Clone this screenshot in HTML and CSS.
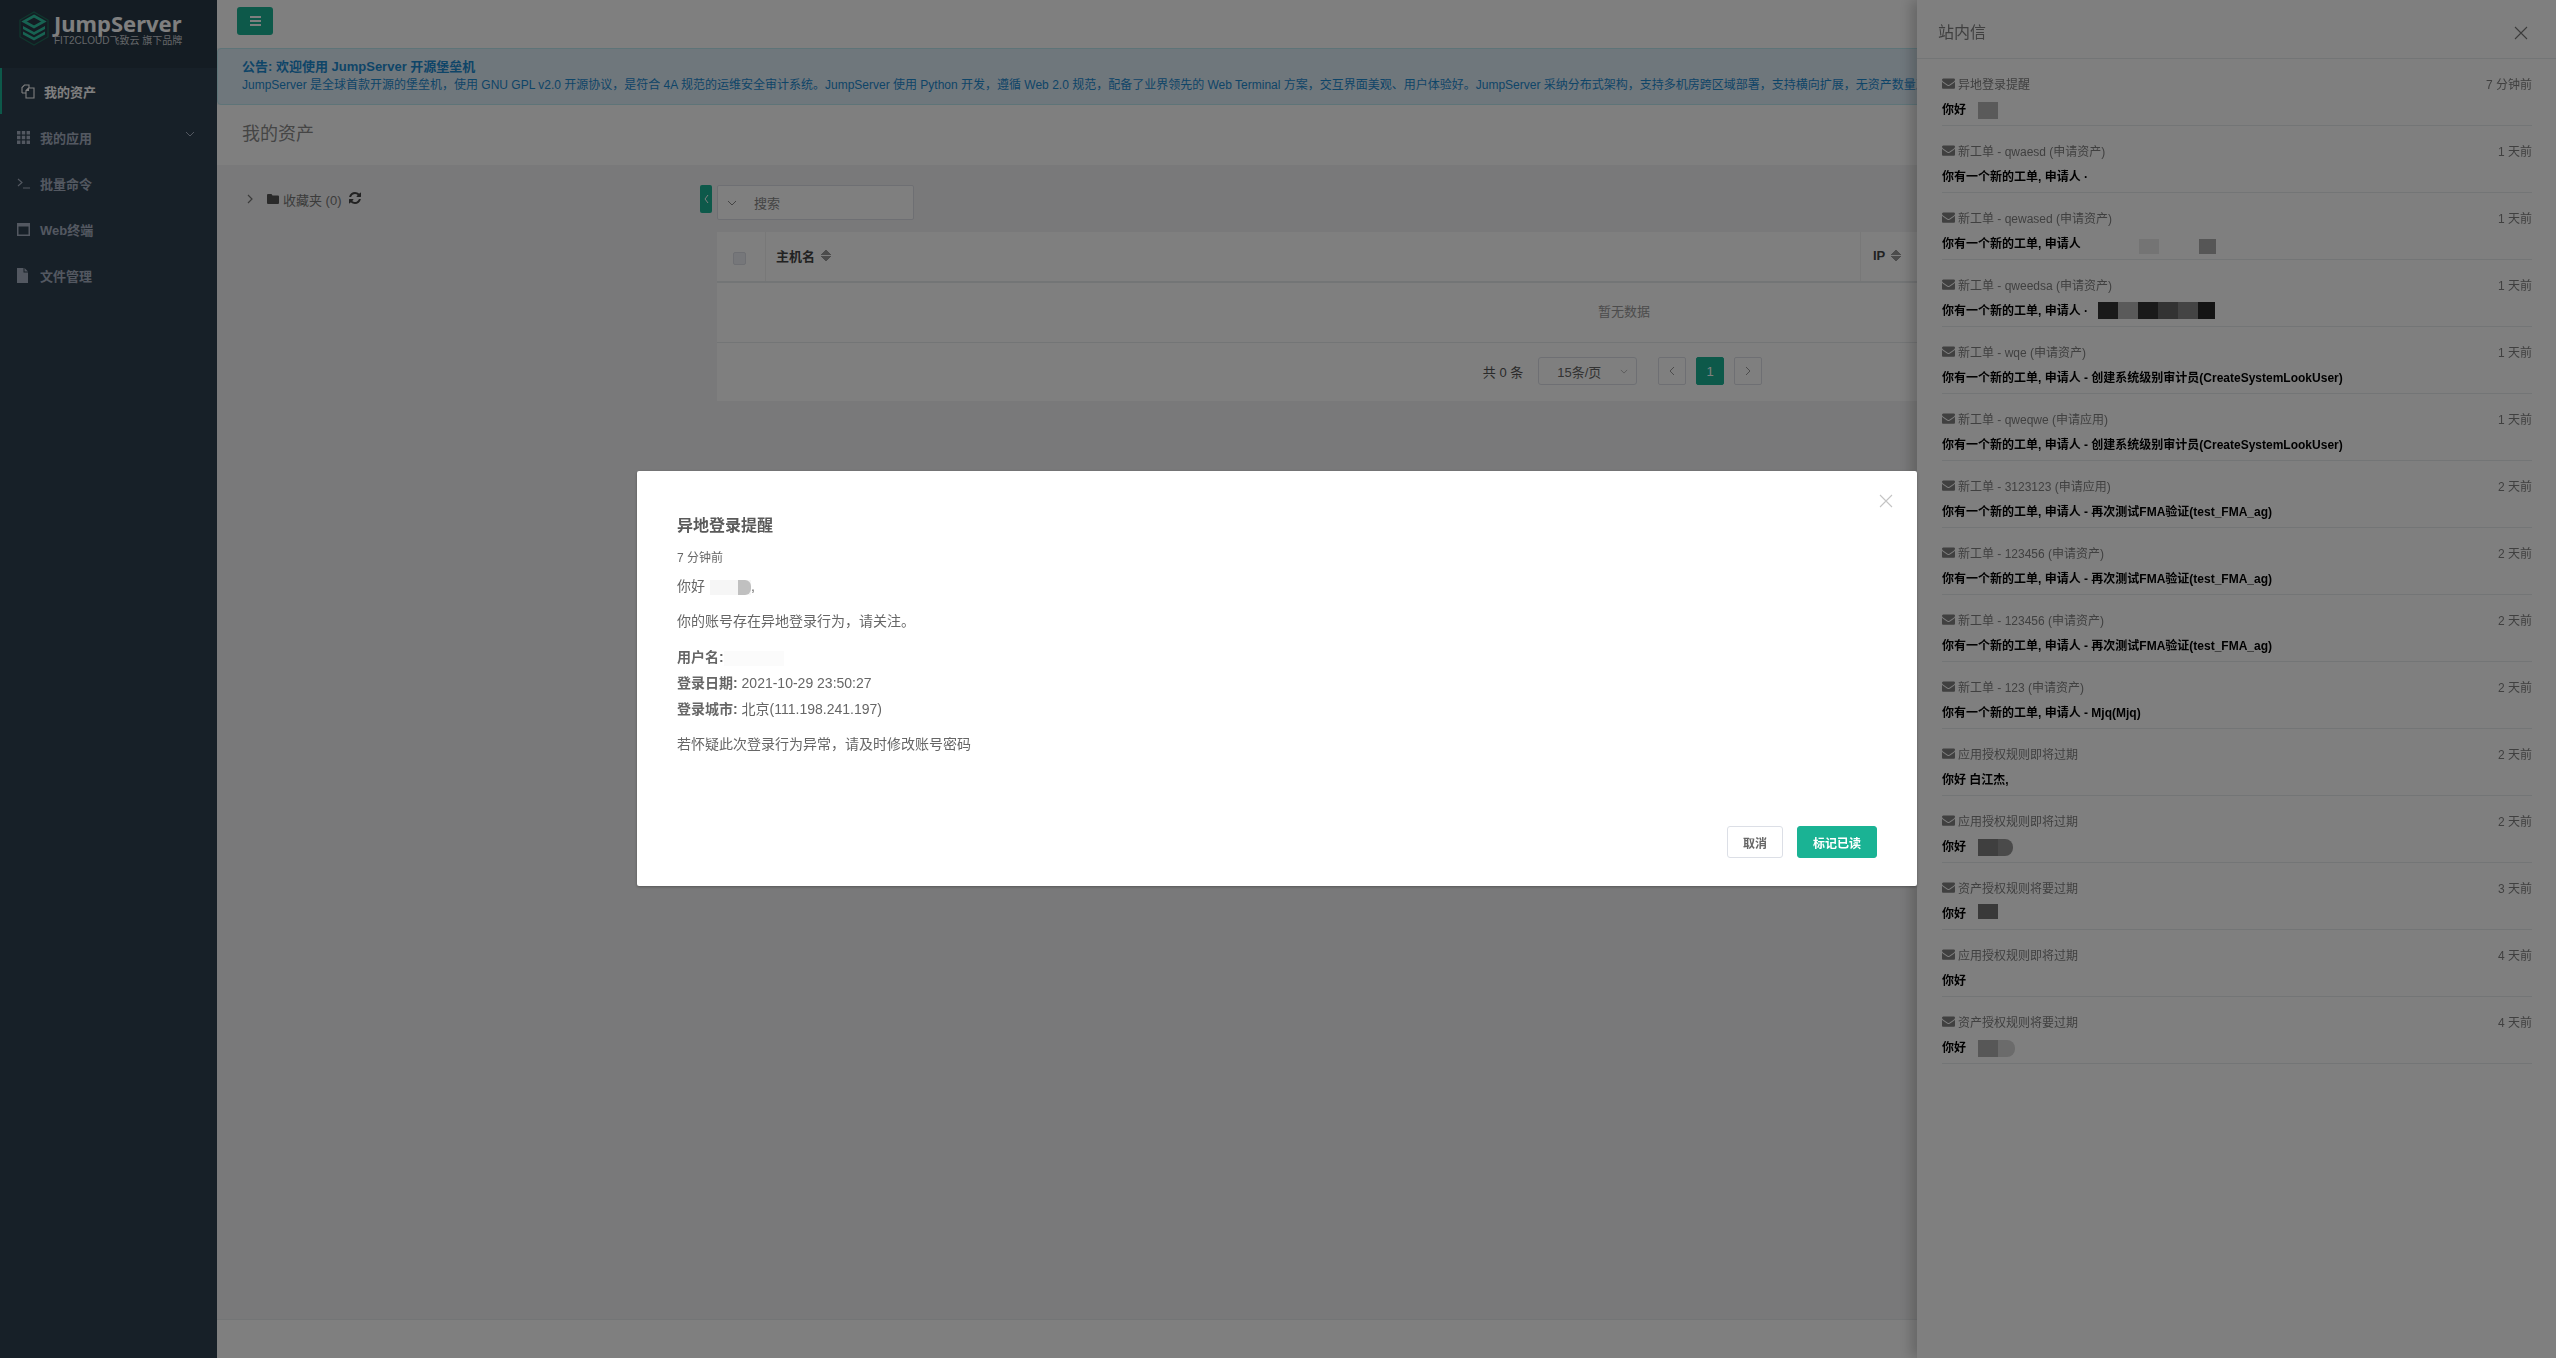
FILE: index.html
```html
<!DOCTYPE html>
<html lang="zh-CN">
<head>
    <meta charset="UTF-8">
    <title>我的资产 - JumpServer</title>
    <link rel="stylesheet" href="styles.css">
</head>
<body>
    <div class="app">
        <aside class="sidebar">
            <div class="logo">
                <svg class="logo-mark" viewBox="0 0 30 35" width="30" height="35">
                    <path d="M15 1 L29 9 V26 L15 34 L1 26 V9 Z" fill="none" stroke="#1f6f5c" stroke-width="1.2"/>
                    <path d="M15 5 L25 10.5 L15 16 L5 10.5 Z" fill="none" stroke="#2fc7a4" stroke-width="2.6"/>
                    <path d="M4 15 L15 21 L26 15 V18 L15 24 L4 18 Z" fill="#2fc7a4"/>
                    <path d="M4 20.5 L15 26.5 L26 20.5 V23.5 L15 29.5 L4 23.5 Z" fill="#2fc7a4"/>
                </svg>
                <div class="logo-text">
                    <div class="logo-name">JumpServer</div>
                    <div class="logo-sub">FIT2CLOUD飞致云 旗下品牌</div>
                </div>
            </div>
            <nav class="menu">
                <a class="menu-item active">
                    <svg class="menu-icon" viewBox="0 0 14 15" width="14" height="15"><path d="M1 9 V3.5 L3.5 1 H8 V4 M5 14 V6.5 L7.5 4 H13 V14 Z M1 9 H5 M7.5 4 V6.5 H5" fill="none" stroke="currentColor" stroke-width="1.1"/></svg>
                    <span>我的资产</span>
                </a>
                <a class="menu-item">
                    <svg class="menu-icon" viewBox="0 0 13 13" width="13" height="13"><path d="M0 0h3.4v3.4H0zM4.8 0h3.4v3.4H4.8zM9.6 0H13v3.4H9.6zM0 4.8h3.4v3.4H0zM4.8 4.8h3.4v3.4H4.8zM9.6 4.8H13v3.4H9.6zM0 9.6h3.4V13H0zM4.8 9.6h3.4V13H4.8zM9.6 9.6H13V13H9.6z" fill="currentColor"/></svg>
                    <span>我的应用</span>
                    <svg class="menu-arrow" viewBox="0 0 10 6" width="10" height="6"><path d="M1 1 L5 5 L9 1" fill="none" stroke="currentColor"/></svg>
                </a>
                <a class="menu-item">
                    <svg class="menu-icon" viewBox="0 0 13 11" width="13" height="11"><path d="M1 1 L5 4.5 L1 8 M6 10 H13" fill="none" stroke="currentColor" stroke-width="1.1"/></svg>
                    <span>批量命令</span>
                </a>
                <a class="menu-item">
                    <svg class="menu-icon" viewBox="0 0 13 13" width="13" height="13"><path d="M0 0H13V13H0ZM1.5 3.5V11.5H11.5V3.5Z" fill="currentColor" fill-rule="evenodd"/></svg>
                    <span>Web终端</span>
                </a>
                <a class="menu-item">
                    <svg class="menu-icon icon-file" viewBox="0 0 11 15" width="11" height="15"><path d="M0 0H6.5V4.5H11V15H0ZM7.5 0L11 3.5H7.5Z" fill="currentColor"/></svg>
                    <span>文件管理</span>
                </a>
            </nav>
        </aside>

        <main class="main">
            <header class="topbar">
                <button class="btn-menu"><svg viewBox="0 0 11 10" width="11" height="10"><path d="M0 0h11v2H0zM0 4h11v2H0zM0 8h11v2H0z" fill="currentColor"/></svg></button>
            </header>
            <div class="notice">
                <div class="notice-title">公告: 欢迎使用 JumpServer 开源堡垒机</div>
                <div class="notice-text">JumpServer 是全球首款开源的堡垒机，使用 GNU GPL v2.0 开源协议，是符合 4A 规范的运维安全审计系统。JumpServer 使用 Python 开发，遵循 Web 2.0 规范，配备了业界领先的 Web Terminal 方案，交互界面美观、用户体验好。JumpServer 采纳分布式架构，支持多机房跨区域部署，支持横向扩展，无资产数量及并发限制。</div>
            </div>
            <div class="page-title">我的资产</div>
            <section class="content">
                <div class="tree">
                    <svg class="tree-arrow" viewBox="0 0 6 10" width="6" height="10"><path d="M1 1 L5 5 L1 9" fill="none" stroke="currentColor" stroke-width="1.2"/></svg>
                    <svg class="tree-folder" viewBox="0 0 12 10" width="12" height="10"><path d="M0 1 Q0 0 1 0 H4.5 L5.5 1.5 H11 Q12 1.5 12 2.5 V9 Q12 10 11 10 H1 Q0 10 0 9 Z" fill="currentColor"/></svg>
                    <span>收藏夹 (0)</span>
                    <svg class="tree-refresh" viewBox="0 0 1792 1792" width="14" height="14"><path d="M1639 1056q0 5-1 7-64 268-268 434.5t-478 166.5q-146 0-282.5-55t-243.5-157l-129 129q-19 19-45 19t-45-19-19-45v-448q0-26 19-45t45-19h448q26 0 45 19t19 45-19 45l-137 137q71 66 161 102t187 36q134 0 250-65t186-179q11-17 53-117 8-23 30-23h192q13 0 22.5 9.5t9.5 22.5zm25-800v448q0 26-19 45t-45 19h-448q-26 0-45-19t-19-45 19-45l138-138q-148-137-349-137-134 0-250 65t-186 179q-11 17-53 117-8 23-30 23h-199q-13 0-22.5-9.5t-9.5-22.5v-7q65-268 270-434.5t480-166.5q146 0 284 55.5t245 156.5l130-129q19-19 45-19t45 19 19 45z" fill="currentColor"/></svg>
                </div>
                <div class="tree-toggle"><svg viewBox="0 0 5 10" width="5" height="10"><path d="M4 1 L1 5 L4 9" fill="none" stroke="currentColor"/></svg></div>
                <div class="panel">
                    <div class="search">
                        <svg viewBox="0 0 10 6" width="10" height="6"><path d="M1 1 L5 5 L9 1" fill="none" stroke="currentColor"/></svg>
                        <span>搜索</span>
                    </div>
                    <div class="table">
                        <div class="table-head">
                            <div class="col-check"><span class="checkbox"></span></div>
                            <div class="col-name">主机名 <span class="sort"></span></div>
                            <div class="col-ip">IP <span class="sort"></span></div>
                        </div>
                        <div class="table-empty">暂无数据</div>
                        <div class="pager">
                            <span class="pager-total">共 0 条</span>
                            <span class="pager-size">15条/页<svg viewBox="0 0 10 6" width="8" height="5"><path d="M1 1 L5 5 L9 1" fill="none" stroke="currentColor"/></svg></span>
                            <span class="pager-btn"><svg viewBox="0 0 6 10" width="6" height="10"><path d="M5 1 L1 5 L5 9" fill="none" stroke="currentColor"/></svg></span>
                            <span class="pager-btn current">1</span>
                            <span class="pager-btn"><svg viewBox="0 0 6 10" width="6" height="10"><path d="M1 1 L5 5 L1 9" fill="none" stroke="currentColor"/></svg></span>
                        </div>
                    </div>
                </div>
            </section>
            <footer class="footer"></footer>
        </main>
    </div>

    <svg class="sprite">
        <symbol id="mail" viewBox="0 0 1792 1500">
            <path transform="translate(0 -192)" d="M1792 710v794q0 66-47 113t-113 47h-1472q-66 0-113-47t-47-113v-794q44 49 101 87 362 246 497 345 57 42 92.5 65.5t94.5 48 110 24.5h2q51 0 110-24.5t94.5-48 92.5-65.5q170-123 498-345 57-39 100-87zm0-294q0 79-49 151t-122 123q-376 261-468 325-10 7-42.5 30.5t-54 38-52 32.5-57.5 27-50 9h-2q-23 0-50-9t-57.5-27-52-32.5-54-38-42.5-30.5q-91-64-262-182.5t-205-142.5q-62-42-117-115.5t-55-136.5q0-78 41.5-130t118.5-52h1472q65 0 112.5 47t47.5 113z" fill="currentColor"/>
        </symbol>
    </svg>

    <aside class="drawer">
        <div class="drawer-head">
            <span>站内信</span>
            <svg viewBox="0 0 14 14" width="14" height="14"><path d="M1 1 L13 13 M13 1 L1 13" fill="none" stroke="currentColor" stroke-width="1.1"/></svg>
        </div>
        <ul class="msg-list">
            <li class="msg">
                <div class="msg-head"><svg class="mail"><use href="#mail"/></svg><span class="msg-title">异地登录提醒</span><span class="msg-time">7 分钟前</span></div>
                <div class="msg-body">你好<span class="mosaic m-name"><i class="px tall c-5a"></i></span></div>
            </li>
            <li class="msg">
                <div class="msg-head"><svg class="mail"><use href="#mail"/></svg><span class="msg-title">新工单 - qwaesd (申请资产)</span><span class="msg-time">1 天前</span></div>
                <div class="msg-body">你有一个新的工单, 申请人 ·<span class="mosaic m-user"><i class="px low c-fa"></i><i class="px low c-fa"></i><i class="px low c-fa"></i></span></div>
            </li>
            <li class="msg">
                <div class="msg-head"><svg class="mail"><use href="#mail"/></svg><span class="msg-title">新工单 - qewased (申请资产)</span><span class="msg-time">1 天前</span></div>
                <div class="msg-body">你有一个新的工单, 申请人<span class="mosaic m-user2"><i class="px mid c-fa"></i><i class="px mid c-fa"></i><i class="px mid c-74"></i><i class="px mid c-fa"></i><i class="px mid c-fa"></i><i class="px mid end c-56"></i></span></div>
            </li>
            <li class="msg">
                <div class="msg-head"><svg class="mail"><use href="#mail"/></svg><span class="msg-title">新工单 - qweedsa (申请资产)</span><span class="msg-time">1 天前</span></div>
                <div class="msg-body">你有一个新的工单, 申请人 ·<span class="mosaic m-user"><i class="px tall c-1a"></i><i class="px tall c-5a"></i><i class="px tall c-1a"></i><i class="px tall c-33"></i><i class="px tall c-44"></i><i class="px tall end c-14"></i></span></div>
            </li>
            <li class="msg">
                <div class="msg-head"><svg class="mail"><use href="#mail"/></svg><span class="msg-title">新工单 - wqe (申请资产)</span><span class="msg-time">1 天前</span></div>
                <div class="msg-body">你有一个新的工单, 申请人 - 创建系统级别审计员(CreateSystemLookUser)</div>
            </li>
            <li class="msg">
                <div class="msg-head"><svg class="mail"><use href="#mail"/></svg><span class="msg-title">新工单 - qweqwe (申请应用)</span><span class="msg-time">1 天前</span></div>
                <div class="msg-body">你有一个新的工单, 申请人 - 创建系统级别审计员(CreateSystemLookUser)</div>
            </li>
            <li class="msg">
                <div class="msg-head"><svg class="mail"><use href="#mail"/></svg><span class="msg-title">新工单 - 3123123 (申请应用)</span><span class="msg-time">2 天前</span></div>
                <div class="msg-body">你有一个新的工单, 申请人 - 再次测试FMA验证(test_FMA_ag)</div>
            </li>
            <li class="msg">
                <div class="msg-head"><svg class="mail"><use href="#mail"/></svg><span class="msg-title">新工单 - 123456 (申请资产)</span><span class="msg-time">2 天前</span></div>
                <div class="msg-body">你有一个新的工单, 申请人 - 再次测试FMA验证(test_FMA_ag)</div>
            </li>
            <li class="msg">
                <div class="msg-head"><svg class="mail"><use href="#mail"/></svg><span class="msg-title">新工单 - 123456 (申请资产)</span><span class="msg-time">2 天前</span></div>
                <div class="msg-body">你有一个新的工单, 申请人 - 再次测试FMA验证(test_FMA_ag)</div>
            </li>
            <li class="msg">
                <div class="msg-head"><svg class="mail"><use href="#mail"/></svg><span class="msg-title">新工单 - 123 (申请资产)</span><span class="msg-time">2 天前</span></div>
                <div class="msg-body">你有一个新的工单, 申请人 - Mjq(Mjq)</div>
            </li>
            <li class="msg">
                <div class="msg-head"><svg class="mail"><use href="#mail"/></svg><span class="msg-title">应用授权规则即将过期</span><span class="msg-time">2 天前</span></div>
                <div class="msg-body">你好 白江杰,</div>
            </li>
            <li class="msg">
                <div class="msg-head"><svg class="mail"><use href="#mail"/></svg><span class="msg-title">应用授权规则即将过期</span><span class="msg-time">2 天前</span></div>
                <div class="msg-body">你好<span class="mosaic m-name"><i class="px tall c-3f"></i><i class="px tall end-pill c-4a"></i></span></div>
            </li>
            <li class="msg">
                <div class="msg-head"><svg class="mail"><use href="#mail"/></svg><span class="msg-title">资产授权规则将要过期</span><span class="msg-time">3 天前</span></div>
                <div class="msg-body">你好<span class="mosaic m-name up"><i class="px mid c-39"></i></span></div>
            </li>
            <li class="msg">
                <div class="msg-head"><svg class="mail"><use href="#mail"/></svg><span class="msg-title">应用授权规则即将过期</span><span class="msg-time">4 天前</span></div>
                <div class="msg-body">你好<span class="mosaic m-name down"><i class="px low c-fa"></i></span></div>
            </li>
            <li class="msg">
                <div class="msg-head"><svg class="mail"><use href="#mail"/></svg><span class="msg-title">资产授权规则将要过期</span><span class="msg-time">4 天前</span></div>
                <div class="msg-body">你好<span class="mosaic m-name"><i class="px tall c-57"></i><i class="px tall wide-pill c-6b"></i></span></div>
            </li>
        </ul>
    </aside>

    <div class="mask">
        <div class="dialog">
            <svg class="dialog-close" viewBox="0 0 14 14" width="14" height="14"><path d="M1 1 L13 13 M13 1 L1 13" fill="none" stroke="currentColor" stroke-width="1.1"/></svg>
            <div class="dialog-body">
                <h3 class="dialog-title">异地登录提醒</h3>
                <div class="dialog-time">7 分钟前</div>
                <p class="first">你好<span class="blur blur-name"><i></i></span>,</p>
                <p>你的账号存在异地登录行为，请关注。</p>
                <div class="detail">
                    <div><b>用户名:</b><span class="blur blur-user"></span></div>
                    <div><b>登录日期:</b> 2021-10-29 23:50:27</div>
                    <div><b>登录城市:</b> 北京(111.198.241.197)</div>
                </div>
                <p>若怀疑此次登录行为异常，请及时修改账号密码</p>
            </div>
            <div class="dialog-foot">
                <button class="btn">取消</button>
                <button class="btn btn-primary">标记已读</button>
            </div>
        </div>
    </div>
</body>
</html>
```

FILE: styles.css
```css
* {
    box-sizing: border-box;
}

body {
    margin: 0;
    height: 100vh;
    overflow: hidden;
    font-family: "Liberation Sans", "Noto Sans CJK SC", sans-serif;
    font-size: 13px;
    color: #676a6c;
    background: #f3f3f4;
}

.app {
    display: flex;
    height: 100vh;
}

/* sidebar */
.sidebar {
    width: 217px;
    flex-shrink: 0;
    background: #2f4050;
}

.logo {
    height: 68px;
    padding: 11px 0 0 19px;
    display: flex;
    gap: 5px;
    background: #293846;
}

.logo-mark {
    flex-shrink: 0;
}

.logo-name {
    font-family: "Noto Sans", sans-serif;
    font-size: 22px;
    font-weight: 700;
    line-height: 24px;
    color: #fff;
    white-space: nowrap;
}

.logo-sub {
    font-size: 10px;
    line-height: 12px;
    color: #c8cdd2;
    white-space: nowrap;
}

.menu-item {
    height: 46px;
    padding-left: 17px;
    display: flex;
    align-items: center;
    font-weight: 700;
    color: #a7b1c2;
    position: relative;
}

.menu-icon {
    flex-shrink: 0;
    margin-right: 10px;
}

.menu-icon.icon-file {
    margin-right: 12px;
}

.menu-item.active {
    padding-left: 19px;
    border-left: 2px solid #1ab394;
    color: #fff;
}

.menu-item.active .menu-icon {
    margin-right: 9px;
}

.menu-arrow {
    margin-left: auto;
    margin-right: 22px;
    margin-top: -7px;
}

/* main */
.main {
    flex: 1;
    min-width: 0;
    display: flex;
    flex-direction: column;
}

.topbar {
    height: 48px;
    padding: 7px 20px;
    background: #fff;
}

.btn-menu {
    width: 36px;
    height: 28px;
    padding: 0;
    border: 0;
    border-radius: 3px;
    background: #1ab394;
    color: #fff;
    display: flex;
    align-items: center;
    justify-content: center;
}

.notice {
    height: 57px;
    padding: 8px 24px 0;
    background: #dfeef8;
    border: 1px solid #bce8f1;
    border-radius: 4px;
    color: #1c8ad0;
    line-height: 19px;
    white-space: nowrap;
    overflow: hidden;
}

.notice-title {
    font-weight: 700;
}

.notice-text {
    font-size: 12px;
}

.page-title {
    height: 60px;
    padding: 17px 25px 0;
    background: #fff;
    font-size: 18px;
    line-height: 24px;
    color: #8a8a8a;
}

.content {
    flex: 1;
    padding: 20px 25px;
    display: flex;
    align-items: flex-start;
}

.footer {
    height: 39px;
    background: #fff;
    border-top: 1px solid #e7eaec;
}

/* tree */
.tree {
    width: 458px;
    flex-shrink: 0;
    height: 28px;
    display: flex;
    align-items: center;
    color: #777;
}

.tree-arrow {
    margin-left: 5px;
    margin-right: 14px;
}

.tree-folder {
    margin-right: 4px;
    color: #555;
}

.tree-refresh {
    margin-left: 6px;
    margin-top: -3px;
    color: #444;
}

.tree-toggle {
    width: 12px;
    height: 28px;
    margin-right: 5px;
    flex-shrink: 0;
    border-radius: 2px;
    background: #1ab394;
    color: #fff;
    display: flex;
    align-items: center;
    justify-content: center;
}

/* table */
.panel {
    flex: 1;
    min-width: 0;
}

.search {
    width: 197px;
    height: 35px;
    margin-bottom: 12px;
    padding-left: 9px;
    display: flex;
    align-items: center;
    gap: 17px;
    background: #fff;
    border: 1px solid #dcdfe6;
    border-radius: 2px;
    color: #888;
}

.table {
    background: #fff;
}

.table-head {
    height: 51px;
    display: flex;
    align-items: stretch;
    border-bottom: 2px solid #e7eaec;
    font-weight: 700;
    color: #444;
}

.col-check {
    width: 49px;
    padding: 4px 4px 0 0;
    border-right: 1px solid #f0f0f0;
    display: flex;
    align-items: center;
    justify-content: center;
}

.checkbox {
    width: 13px;
    height: 13px;
    border: 1px solid #dcdfe6;
    border-radius: 2px;
    background: #eceef4;
}

.col-name {
    width: 1095px;
    padding: 0 0 3px 10px;
    border-right: 1px solid #f0f0f0;
    display: flex;
    align-items: center;
    gap: 6px;
}

.col-ip {
    padding: 0 0 3px 12px;
    display: flex;
    align-items: center;
    gap: 6px;
}

.sort {
    width: 10px;
    height: 13px;
    background:
        conic-gradient(from 140deg at 50% 0, #999 80deg, transparent 0) top / 10px 6px no-repeat,
        conic-gradient(from -40deg at 50% 100%, #999 80deg, transparent 0) bottom / 10px 6px no-repeat;
}

.table-empty {
    height: 60px;
    line-height: 58px;
    text-align: center;
    border-bottom: 1px solid #e7eaec;
    color: #999;
}

.pager {
    height: 58px;
    padding: 0 3px 2px 0;
    display: flex;
    align-items: center;
    justify-content: center;
    font-size: 13px;
    color: #555;
}

.pager-total {
    margin-right: 15px;
}

.pager-size {
    width: 99px;
    height: 28px;
    margin-right: 21px;
    padding: 0 8px 0 18px;
    display: flex;
    align-items: center;
    justify-content: space-between;
    border: 1px solid #dcdfe6;
    border-radius: 3px;
    color: #666;
}

.pager-size svg {
    color: #aaa;
}

.pager-btn {
    width: 28px;
    height: 28px;
    margin-right: 10px;
    display: flex;
    align-items: center;
    justify-content: center;
    border: 1px solid #dcdfe6;
    border-radius: 2px;
    color: #999;
}

.pager-btn:last-child {
    margin-right: 0;
}

.pager-btn.current {
    background: #1ab394;
    border-color: #1ab394;
    color: #fff;
}

/* drawer */
.sprite {
    display: none;
}

.drawer {
    position: fixed;
    top: 0;
    right: 0;
    bottom: 0;
    width: 639px;
    background: #fff;
    box-shadow: -6px 0 12px rgba(0, 0, 0, 0.2);
}

.drawer-head {
    height: 59px;
    padding: 23px 28px 15px 21px;
    display: flex;
    align-items: center;
    justify-content: space-between;
    border-bottom: 1px solid #e7eaec;
    font-size: 16px;
    line-height: 20px;
    color: #808080;
}

.drawer-head svg {
    color: #777;
}

.msg-list {
    list-style: none;
    margin: 0;
    padding: 0 24px 0 25px;
}

.msg {
    height: 67px;
    padding-top: 14px;
    border-bottom: 1px solid #e7eaec;
}

.msg-head {
    height: 20px;
    display: flex;
    align-items: center;
    font-size: 12px;
    color: #808080;
}

.mail {
    width: 13px;
    height: 11px;
    margin-right: 3px;
    color: #808080;
}

.msg-time {
    margin-left: auto;
}

.msg-body {
    height: 20px;
    margin-top: 7px;
    display: flex;
    align-items: flex-start;
    font-size: 12px;
    font-weight: 700;
    line-height: 20px;
    color: #000;
}

/* redacted names */
.mosaic {
    display: flex;
    align-items: flex-start;
}

.m-name {
    margin-left: 12px;
    margin-top: 2px;
}

.m-name.up {
    margin-top: 0;
}

.m-name.down {
    margin-top: 8px;
}

.m-user {
    margin-left: 10px;
    margin-top: 1px;
}

.m-user2 {
    margin-left: 18px;
    margin-top: 5px;
}

.px {
    display: block;
    width: 20px;
    height: 17px;
}

.px.low {
    height: 12px;
}

.px.mid {
    height: 15px;
}

.px.end {
    width: 17px;
}

.px.end-pill {
    width: 15px;
    border-radius: 0 8px 8px 0;
}

.px.wide-pill {
    width: 17px;
    border-radius: 0 8px 8px 0;
}

.c-14 { background: #282828; }
.c-1a { background: #343434; }
.c-33 { background: #666; }
.c-39 { background: #727272; }
.c-3f { background: #7e7e7e; }
.c-44 { background: #888; }
.c-4a { background: #949494; }
.c-56 { background: #acacac; }
.c-57 { background: #aeaeae; }
.c-5a { background: #b4b4b4; }
.c-6b { background: #d6d6d6; }
.c-74 { background: #e8e8e8; }
.c-fa { background: #fff; }

/* dialog */
.mask {
    position: fixed;
    inset: 0;
    padding: 0 2px 1px 0;
    display: flex;
    align-items: center;
    justify-content: center;
    background: rgba(0, 0, 0, 0.5);
}

.dialog {
    width: 1280px;
    height: 415px;
    padding: 43px 40px 28px;
    display: flex;
    flex-direction: column;
    position: relative;
    background: #fff;
    border-radius: 2px;
    box-shadow: 0 1px 3px rgba(0, 0, 0, 0.3);
    font-size: 14px;
    line-height: 26px;
    color: #666;
}

.dialog-close {
    position: absolute;
    top: 23px;
    right: 24px;
    color: #c4c4c4;
}

.dialog-body {
    flex: 1;
}

.dialog-title {
    margin: 0;
    font-size: 16px;
    line-height: 24px;
    color: #5a5a5a;
}

.dialog-time {
    margin-top: 10px;
    font-size: 12px;
    line-height: 20px;
}

.dialog-body p {
    margin: 9px 0 0;
}

.dialog-body p.first {
    margin-top: 5px;
}

.detail {
    margin-top: 10px;
}

.blur {
    display: inline-block;
    vertical-align: middle;
    background: #f6f6f6;
}

.blur-name {
    width: 41px;
    height: 15px;
    margin-left: 5px;
    text-align: right;
}

.blur-name i {
    display: inline-block;
    width: 13px;
    height: 15px;
    vertical-align: top;
    border-radius: 0 6px 6px 0;
    background: #c0c0c0;
}

.blur-user {
    width: 60px;
    height: 15px;
    background: #fbfbfb;
}

.dialog-foot {
    display: flex;
    justify-content: flex-end;
    gap: 14px;
}

.btn {
    width: 56px;
    height: 32px;
    padding: 0;
    background: #fff;
    border: 1px solid #dcdfe6;
    border-radius: 3px;
    font-family: inherit;
    font-size: 12px;
    font-weight: 700;
    color: #666;
}

.btn-primary {
    width: 80px;
    background: #1ab394;
    border-color: #1ab394;
    color: #fff;
}
```
